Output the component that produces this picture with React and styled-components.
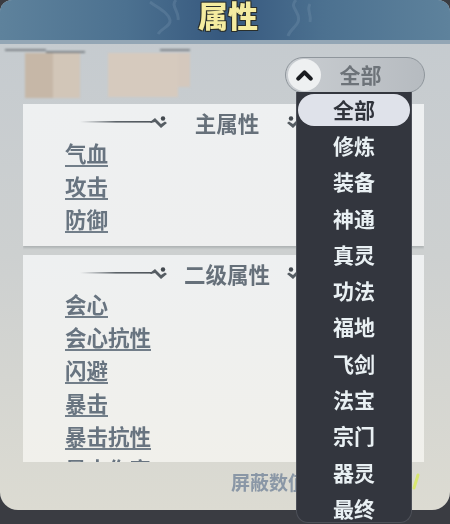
import React from "react";
import styled, { createGlobalStyle } from "styled-components";
import { ChevronUp } from "lucide-react";

const GlobalStyle = createGlobalStyle`
  html, body {
    margin: 0;
    padding: 0;
    height: 524px;
    overflow: hidden;
    background: #3a3c42;
  }
  * {
    box-sizing: border-box;
  }
`;

const Screen = styled.div`
  width: 450px;
  height: 524px;
  background: #3a3c42;
  font-family: "Noto Sans CJK SC", "Noto Sans", sans-serif;
  overflow: hidden;
  filter: blur(0.5px);
`;

const Panel = styled.div`
  width: 450px;
  height: 510px;
  display: flex;
  flex-direction: column;
  border-radius: 12px 12px 18px 18px;
  background: linear-gradient(180deg, #c4cacf 0%, #cdd0d0 50%, #dcdbd2 100%);
`;

const Header = styled.div`
  position: relative;
  height: 44px;
  flex-shrink: 0;
  padding: 0 0 12px 6px;
  display: flex;
  align-items: center;
  justify-content: center;
  border-radius: 12px 12px 0 0;
  border-bottom: 4px solid #93a6b5;
  background: linear-gradient(
    90deg,
    #5e829c 0%,
    #4c7190 28%,
    #36587e 50%,
    #4c7190 72%,
    #5e829c 100%
  );
`;

const Swirl = styled.svg`
  position: absolute;
  top: 0;
  left: 0;
`;

const Title = styled.h1`
  position: relative;
  margin: 0;
  font-size: 30px;
  line-height: 28px;
  font-weight: 900;
  color: #f4eca0;
  text-shadow: 1px 1px 0 #2a2f2c, -1px 1px 0 #2a2f2c, 1px -1px 0 #2a2f2c, -1px -1px 0 #2a2f2c;
`;

const Toolbar = styled.div`
  height: 60px;
  flex-shrink: 0;
  display: flex;
  justify-content: space-between;
  padding: 5px 25px 0 5px;
`;

const Smudges = styled.div`
  width: 186px;
  filter: blur(1.2px);
`;

const TraceRow = styled.div`
  display: flex;
  height: 2px;
`;

const Trace = styled.div`
  width: ${(p) => p.$w}px;
  margin-left: ${(p) => p.$skip || 0}px;
  margin-top: ${(p) => p.$drop || 0}px;
  height: 2px;
  background: #7d8388;
`;

const BlotRow = styled.div`
  display: flex;
  align-items: flex-start;
  margin: 2px 0 0 20px;
`;

const Blot = styled.div`
  width: ${(p) => p.$w}px;
  height: ${(p) => p.$h}px;
  margin-left: ${(p) => p.$skip || 0}px;
  background: ${(p) => p.$c};
`;

const SelectWrap = styled.div`
  position: relative;
  width: 140px;
  height: 36px;
  margin-top: 8px;
  z-index: 5;
`;

const Trigger = styled.div`
  height: 36px;
  display: flex;
  align-items: center;
  padding: 0 2px;
  border: 1px solid #8f969c;
  border-radius: 18px;
  background: linear-gradient(90deg, #c9cdd1 0%, #b6bbc0 100%);
`;

const Knob = styled.div`
  width: 33px;
  height: 32px;
  flex-shrink: 0;
  display: flex;
  align-items: center;
  justify-content: center;
  border-radius: 50%;
  background: #eef0f1;
  color: #1a1c20;
`;

const TriggerLabel = styled.span`
  flex: 1;
  padding: 0 22px 3px 0;
  text-align: center;
  font-size: 21px;
  line-height: 30px;
  font-weight: 700;
  color: #6d7379;
`;

const Menu = styled.div`
  position: absolute;
  top: 35px;
  left: 11px;
  width: 116px;
  height: 431px;
  display: grid;
  grid-auto-rows: 36.3px;
  background: #33363e;
  border: solid #4d5058;
  border-width: 0 1px 1px;
  border-radius: 0 0 12px 12px;
`;

const MenuItem = styled.div`
  margin: ${(p) => (p.$active ? "2px 1px" : "0")};
  padding-bottom: 3px;
  display: flex;
  align-items: center;
  justify-content: center;
  font-size: 21px;
  font-weight: 700;
  color: ${(p) => (p.$active ? "#30333b" : "#e9f0f3")};
  background: ${(p) => (p.$active ? "#dfe2ea" : "transparent")};
  border-radius: 16px;
`;

const CardList = styled.div`
  flex: 1;
  margin: 0 26px 0 23px;
  display: flex;
  flex-direction: column;
  gap: 9px;
  overflow: hidden;
`;

const Card = styled.section`
  flex-shrink: 0;
  height: ${(p) => p.$h}px;
  padding: 3px 0 0 42px;
  background: linear-gradient(180deg, #eef0f1 0%, ${(p) => p.$end} 100%);
  box-shadow: 0 2px 2px rgba(120, 125, 130, 0.35);
`;

const Heading = styled.div`
  height: 30px;
  margin-left: 15px;
  display: grid;
  grid-template-columns: 88px 118px 88px;
  align-items: center;
`;

const HeadingText = styled.h2`
  margin: 0;
  text-align: center;
  font-size: 21.5px;
  line-height: 29px;
  font-weight: 700;
  color: #66707a;
`;

const OrnamentSvg = styled.svg`
  display: block;
  transform: ${(p) => (p.$flip ? "scaleX(-1)" : "none")};
`;

const StatRow = styled.div`
  height: 33px;
  display: flex;
  align-items: center;
`;

const StatName = styled.span`
  font-size: 21.5px;
  line-height: 24px;
  font-weight: 700;
  color: #687480;
  border-bottom: 2px solid #727e89;
`;

const Footer = styled.div`
  height: 48px;
  flex-shrink: 0;
  display: flex;
  align-items: center;
  justify-content: space-between;
  padding: 0 30px 9px 231px;
`;

const FooterLabel = styled.span`
  font-size: 19px;
  font-weight: 700;
  color: #8a97a6;
`;

const Ornament = ({ flip }) => {
  const id = flip ? "fadeB" : "fadeA";
  return (
    <OrnamentSvg $flip={flip} width="88" height="20" viewBox="0 0 88 20">
      <defs>
        <linearGradient id={id} x1="0" x2="1" y1="0" y2="0">
          <stop offset="0" stopColor="#6c7379" stopOpacity="0" />
          <stop offset="0.5" stopColor="#5d646a" />
          <stop offset="1" stopColor="#4f555b" />
        </linearGradient>
      </defs>
      <rect x="0" y="9" width="72" height="1.6" fill={`url(#${id})`} />
      <path d="M70 10 L75 6 L81 12 L85 9.5 L87 11 L81 16 L75 10 L71 11 Z" fill="#565d63" />
      <circle cx="83" cy="6.5" r="2.2" fill="#43494f" />
    </OrnamentSvg>
  );
};

const mainStats = ["气血", "攻击", "防御"];
const subStats = ["会心", "会心抗性", "闪避", "暴击", "暴击抗性", "暴击伤害"];
const menuItems = ["全部", "修炼", "装备", "神通", "真灵", "功法", "福地", "飞剑", "法宝", "宗门", "器灵", "最终"];

const App = () => {
  return (
    <Screen>
      <GlobalStyle />
      <Panel>
        <Header>
          <Swirl width="450" height="40" viewBox="0 0 450 40" fill="none" stroke="#7f9cb3" strokeOpacity="0.28" strokeWidth="3">
            <path d="M150 2c8 6 18 10 20 18 1 6-8 8-12 14" />
            <path d="M176 0c-6 6 4 12 2 20" />
            <path d="M296 0c-8 8 6 12 2 22-2 5-8 8-10 14" />
            <path d="M310 4c-4 6 2 10 0 18" />
          </Swirl>
          <Title>属性</Title>
        </Header>
        <Toolbar>
          <Smudges>
            <TraceRow>
              <Trace $w={41} />
              <Trace $w={39} $drop={2} />
              <Trace $w={30} $skip={75} />
            </TraceRow>
            <BlotRow>
              <Blot $w={28} $h={45} $c="#c6b7a7" />
              <Blot $w={27} $h={45} $c="#d2c6b8" />
              <Blot $w={70} $h={44} $skip={28} $c="#d6cabe" />
              <Blot $w={12} $h={34} $c="#d4c8bd" />
            </BlotRow>
          </Smudges>
          <SelectWrap>
            <Trigger>
              <Knob>
                <ChevronUp size={25} strokeWidth={4} />
              </Knob>
              <TriggerLabel>全部</TriggerLabel>
            </Trigger>
            <Menu>
              {menuItems.map((item, i) => (
                <MenuItem key={item} $active={i === 0}>
                  {item}
                </MenuItem>
              ))}
            </Menu>
          </SelectWrap>
        </Toolbar>
        <CardList>
          <Card $h={142} $end="#eeefef">
            <Heading>
              <Ornament />
              <HeadingText>主属性</HeadingText>
              <Ornament flip />
            </Heading>
            {mainStats.map((name) => (
              <StatRow key={name}>
                <StatName>{name}</StatName>
              </StatRow>
            ))}
          </Card>
          <Card $h={240} $end="#f1f0ea">
            <Heading>
              <Ornament />
              <HeadingText>二级属性</HeadingText>
              <Ornament flip />
            </Heading>
            {subStats.map((name) => (
              <StatRow key={name}>
                <StatName>{name}</StatName>
              </StatRow>
            ))}
          </Card>
        </CardList>
        <Footer>
          <FooterLabel>屏蔽数值</FooterLabel>
          <svg width="8" height="18" viewBox="0 0 8 18">
            <path d="M6 2 L2 15" stroke="#d8ea5a" strokeWidth="3" strokeLinecap="round" opacity="0.8" />
          </svg>
        </Footer>
      </Panel>
    </Screen>
  );
};

export default App;
